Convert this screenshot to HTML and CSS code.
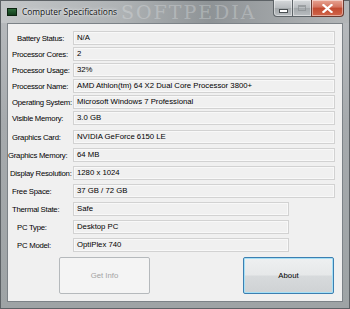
FILE: index.html
```html
<!DOCTYPE html>

<html>
    <head>
        <meta charset="UTF-8">
        <title>Computer Specifications</title>

        <link rel="stylesheet" href="styles.css">
    </head>

    <body>
        <div class="window">
            <div class="titlebar">
                <div class="app-icon"></div>
                <span class="title">Computer Specifications</span>
                <span class="watermark">SOFTPEDIA</span>
                <div class="caption-buttons">
                    <div class="cap-btn cap-min"><span class="min-bar"></span></div>
                    <div class="cap-btn cap-max"><span class="max-box"></span></div>
                    <div class="cap-btn cap-close">
                        <svg width="11" height="9" viewBox="0 0 11 9">
                            <path d="M1.5 1 L9.5 8 M9.5 1 L1.5 8" stroke="#fff" stroke-width="2.2" stroke-linecap="square"/>
                        </svg>
                    </div>
                </div>
            </div>

            <div class="client">
                <div class="rows">
                    <div class="row"><label class="lbl in5">Battery Status:</label><div class="field">N/A</div></div>
                    <div class="row"><label class="lbl">Processor Cores:</label><div class="field">2</div></div>
                    <div class="row"><label class="lbl">Processor Usage:</label><div class="field">32%</div></div>
                    <div class="row"><label class="lbl">Processor Name:</label><div class="field">AMD Athlon(tm) 64 X2 Dual Core Processor 3800+</div></div>
                    <div class="row"><label class="lbl">Operating System:</label><div class="field">Microsoft Windows 7 Professional</div></div>
                    <div class="row"><label class="lbl">Visible Memory:</label><div class="field">3.0 GB</div></div>
                </div>

                <div class="rows rows-wide">
                    <div class="row"><label class="lbl">Graphics Card:</label><div class="field">NVIDIA GeForce 6150 LE</div></div>
                    <div class="row"><label class="lbl out5">Graphics Memory:</label><div class="field">64 MB</div></div>
                    <div class="row"><label class="lbl out2">Display Resolution:</label><div class="field">1280 x 1024</div></div>
                    <div class="row"><label class="lbl">Free Space:</label><div class="field">37 GB / 72 GB</div></div>
                    <div class="row"><label class="lbl">Thermal State:</label><div class="field short">Safe</div></div>
                    <div class="row"><label class="lbl in5">PC Type:</label><div class="field short">Desktop PC</div></div>
                    <div class="row"><label class="lbl in5">PC Model:</label><div class="field short">OptiPlex 740</div></div>
                </div>

                <div class="actions">
                    <button class="btn" disabled>Get Info</button>
                    <button class="btn btn-focus">About</button>
                </div>
            </div>
        </div>
    </body>
</html>
```

FILE: styles.css
```css
* {
    margin: 0;
    padding: 0;
    box-sizing: border-box;
}

html, body {
    width: 100%;
    height: 100%;
}

body {
    font-family: "Liberation Sans", Arial, sans-serif;
    background-color: #8c9196;
    overflow: hidden;
}

.window {
    width: 350px;
    height: 309px;
    display: flex;
    flex-direction: column;
    background: linear-gradient(to bottom, #b9bcbf 0%, #a6aaad 40%, #9ea3a5 100%);
    border: 1px solid #5d6266;
}

/* title bar */

.titlebar {
    height: 22px;
    display: flex;
    align-items: flex-start;
    position: relative;
    background: linear-gradient(to right, #c3c6c8 0%, #aeb2b4 35%, #8e9396 60%, #b3b6b8 100%);
}

.app-icon {
    width: 10px;
    height: 8px;
    margin: 7px 0 0 6px;
    background: linear-gradient(to bottom, #2d6a3a, #123d1c);
    border: 1px solid #0d2410;
}

.title {
    font-family: "Open Sans", "Liberation Sans", sans-serif;
    font-size: 8.4px;
    color: #111;
    margin: 5px 0 0 5px;
    text-shadow: 0 0 4px #e8eaeb, 0 0 2px #f2f3f4;
}

.watermark {
    position: absolute;
    left: 120px;
    top: 0;
    font-family: "DejaVu Serif", serif;
    font-size: 19px;
    letter-spacing: 2px;
    color: rgba(235, 238, 240, 0.3);
}

.caption-buttons {
    margin-left: auto;
    margin-right: 5px;
    display: flex;
    margin-top: -1px;
    position: relative;
}

.cap-btn {
    height: 17px;
    border: 1px solid #5e6468;
    border-top: none;
    display: flex;
    align-items: center;
    justify-content: center;
    background: linear-gradient(to bottom, #d6d9db 0%, #b8bcbf 50%, #a3a8ab 51%, #b9bdc0 100%);
    box-shadow: inset 0 0 0 1px rgba(255, 255, 255, 0.45);
}

.cap-min,
.cap-max {
    width: 19px;
    border-right: none;
}

.cap-min {
    border-bottom-left-radius: 4px;
}

.min-bar {
    width: 7px;
    height: 2px;
    margin-top: 5px;
    background-color: #fff;
    border: 1px solid #4a4f52;
    box-sizing: content-box;
}

.max-box {
    width: 8px;
    height: 6px;
    border: 1px solid #8a8f92;
    border-top-width: 2px;
    opacity: 0.7;
}

.cap-close {
    width: 33px;
    border-bottom-right-radius: 4px;
    background: linear-gradient(to bottom, #e8a493 0%, #d3735e 45%, #c24a30 50%, #d0654a 100%);
    border-color: #6b3a30;
}

/* client area */

.client {
    flex: 1;
    margin: 0 6px 6px 6px;
    background-color: #f0f0f0;
    border: 1px solid #7c8287;
    padding: 7px 0 0 0;
}

.rows {
    display: flex;
    flex-direction: column;
    gap: 2px;
}

.rows-wide {
    margin-top: 5px;
    gap: 4px;
}

.row {
    display: flex;
    align-items: center;
    height: 14px;
}

.lbl {
    flex: 0 0 65px;
    padding-left: 4px;
    font-size: 7.75px;
    letter-spacing: -0.25px;
    color: #000;
    white-space: nowrap;
}

.in5 {
    padding-left: 9px;
}

.out5 {
    padding-left: 0;
}

.out2 {
    padding-left: 2px;
}

.field {
    width: 262px;
    height: 14px;
    border: 1px solid #d2d2d2;
    box-shadow: inset 0 0 0 1px #f8f8f8;
    background-color: #f0f0f0;
    font-size: 7.75px;
    line-height: 12px;
    padding-left: 3px;
    color: #000;
    white-space: nowrap;
    overflow: hidden;
}

.short {
    width: 216px;
}

/* buttons */

.actions {
    display: flex;
    justify-content: space-between;
    padding: 5px 8px 0 51px;
}

.btn {
    width: 91px;
    height: 37px;
    font-family: "Liberation Sans", Arial, sans-serif;
    font-size: 7.75px;
    border-radius: 2px;
}

.btn:disabled {
    color: #a3a3a3;
    background-color: #f4f4f4;
    border: 1px solid #b5b9bc;
}

.btn-focus {
    color: #000;
    border: 1px solid #3c7fb1;
    box-shadow: inset 0 0 0 1px #a6e0f6;
    background: linear-gradient(to bottom, #eef0f1 0%, #e6e8e9 48%, #d7dadc 52%, #cfd2d4 100%);
}
```
